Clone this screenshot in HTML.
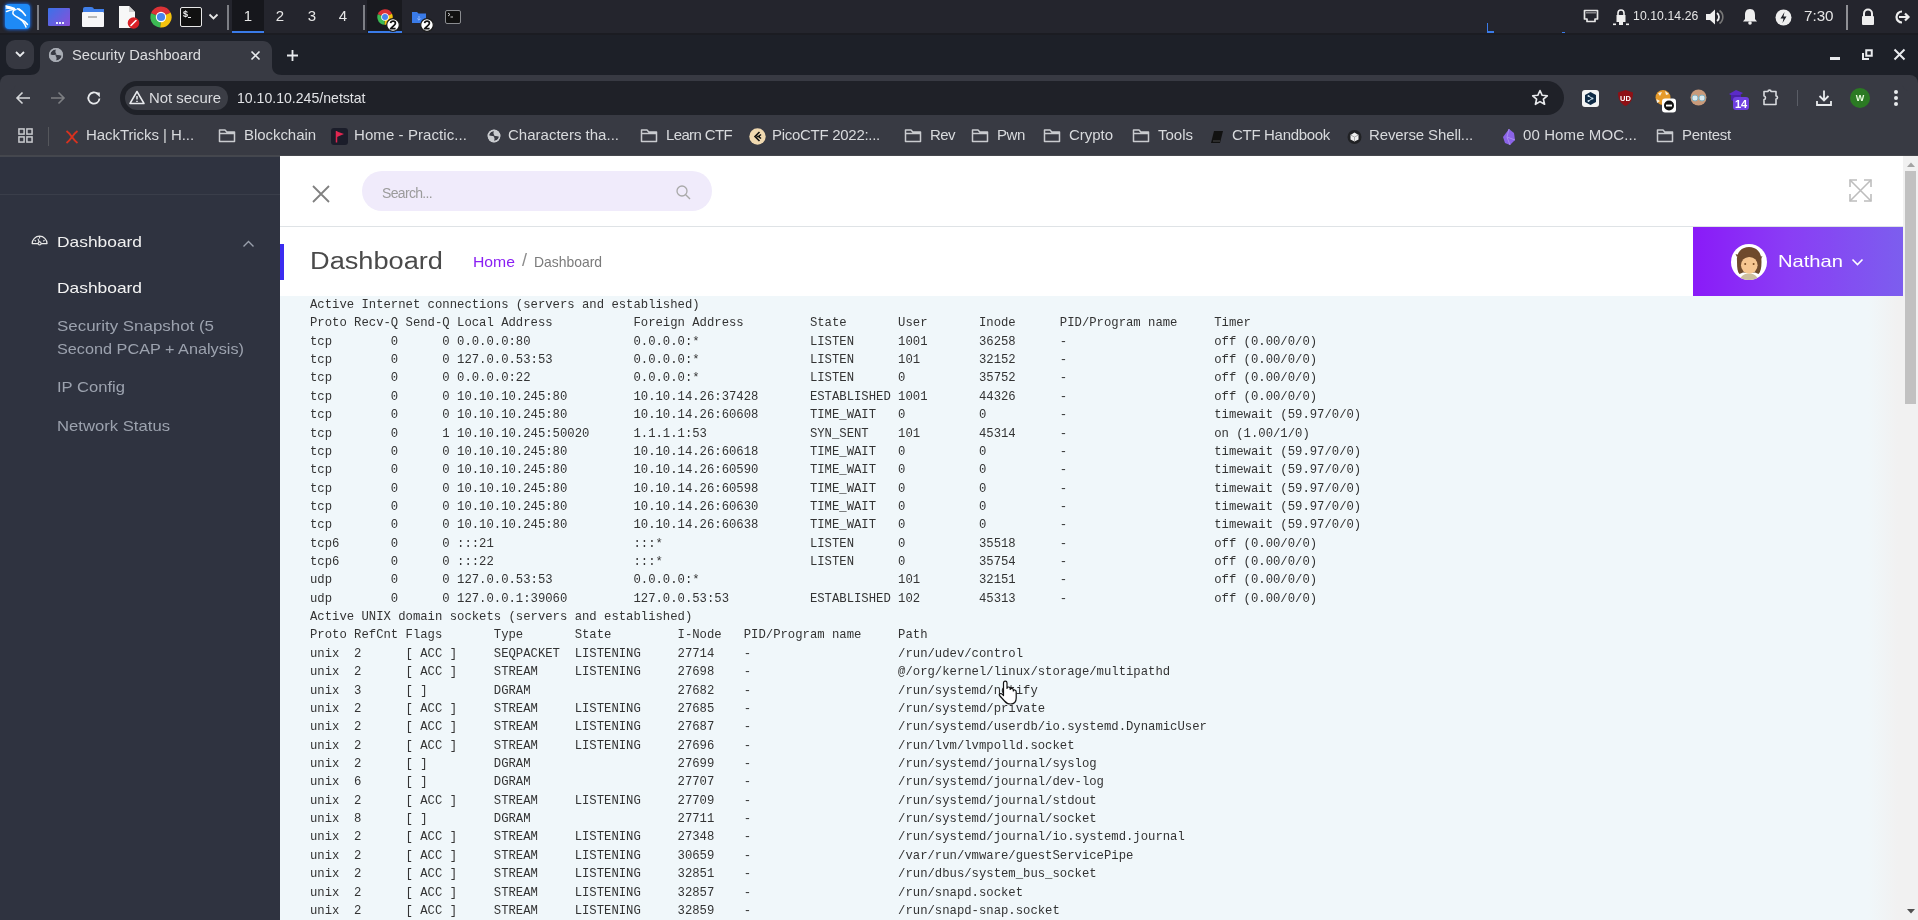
<!DOCTYPE html>
<html><head><meta charset="utf-8">
<style>
*{margin:0;padding:0;box-sizing:border-box}
html,body{width:1918px;height:920px;overflow:hidden;background:#202124;font-family:"Liberation Sans",sans-serif}
.abs{position:absolute}
#taskbar,#tabstrip,#toolbar,#bmbar,#page{will-change:transform}
#taskbar{left:0;top:0;width:1918px;height:34px;background:#24252d}
#tabstrip{left:0;top:33px;width:1918px;height:42px;background:#1d2028}
#toolbar{left:0;top:75px;width:1918px;height:43px;background:#383a43}
#bmbar{left:0;top:118px;width:1918px;height:38px;background:#383a43}
#page{left:0;top:156px;width:1918px;height:764px;background:#f0f6f9;overflow:hidden}
#sidebar{left:0;top:0;width:280px;height:764px;background:#2f3340}
#header{left:280px;top:0;width:1623px;height:71px;background:#fff;border-bottom:1px solid #dfe3e6}
#titlebar{left:280px;top:71px;width:1623px;height:69px;background:#fff}
#content{left:280px;top:140px;width:1623px;height:624px;background:#f0f7fa}
pre{font-family:"Liberation Mono",monospace;font-size:12.25px;line-height:18.358px;color:#333}
#scroll{left:1903px;top:0;width:15px;height:764px;background:#f1f1f1}
.tb{color:#e6e6e6;font-size:15px}
.badge{width:13px;height:13px;border-radius:50%;background:#fff;border:1.5px solid #111;color:#111;font:bold 10px "Liberation Sans",sans-serif;text-align:center;line-height:10px}
.sb{font-size:14.6px;white-space:nowrap}
.bm{color:#d8dadd;font-size:15px;white-space:nowrap}
</style></head><body>
<div id="taskbar" class="abs">
  <!-- kali -->
  <div class="abs" style="left:5px;top:4px;width:25px;height:25px;border-radius:4px;background:#1e8af6;box-shadow:0 0 3px 1px #1a5fc8"></div>
  <svg class="abs" style="left:0;top:0" width="36" height="36" viewBox="0 0 36 36"><g stroke="#fff" stroke-width="1.5" fill="none" stroke-linecap="round"><path d="M6 6 C9 6.5 12 7.5 14.5 8.5"/><path d="M6.2 8 C9 8.2 12 8.6 14 9.2"/><path d="M6.5 11.5 C9 10.5 11.5 9.8 14 9.6"/><path d="M7 7 L10 7.8"/><path d="M19 9 C21.5 10.5 23.5 12.5 25.5 15.5"/><path d="M16 9.5 C12.5 10 12 13.5 14 15 C16 17 20 18 22.5 21 C24 23 25.5 25 26 27"/><path d="M21 19.5 C23.5 20.5 26 22 27.5 24.5"/><path d="M17.5 8.8 C19 9.5 20.5 10.5 22 11.5"/></g></svg>
  <div class="abs" style="left:37px;top:5px;width:2px;height:25px;background:#7d7f85"></div>
  <div class="abs" style="left:48px;top:8px;width:22px;height:18px;border-radius:1px;background:linear-gradient(135deg,#3a72e8,#8a4fd8)"></div>
  <div class="abs" style="left:56px;top:22px;width:2px;height:2px;background:#e8eeff;box-shadow:3px 0 0 #e8eeff,6px 0 0 #e8eeff"></div>
  <div class="abs" style="left:83px;top:7px;width:11px;height:4px;border-radius:2px 3px 0 0;background:#3f7ee8"></div>
  <div class="abs" style="left:83px;top:9px;width:21px;height:3px;background:#3f7ee8"></div>
  <div class="abs" style="left:82px;top:12px;width:22px;height:15px;border-radius:1px;background:#f6f6f8"></div>
  <div class="abs" style="left:88px;top:16px;width:9px;height:2px;background:#b8b8b8"></div>
  <svg class="abs" style="left:117px;top:5px" width="24" height="25" viewBox="0 0 24 25"><path d="M2 1 H12 L18 7 V23 H2 Z" fill="#f7f7f7"/><path d="M12 1 L18 7 H12 Z" fill="#d0d0d0"/><circle cx="16.5" cy="18" r="5.8" fill="#d92127"/><path d="M14 20.5 L19 15.5" stroke="#fff" stroke-width="1.6" stroke-linecap="round"/></svg>
  <svg class="abs" style="left:150px;top:6px" width="22" height="22" viewBox="0 0 22 22"><path d="M11 11 L1.04 7.37 A10.6 10.6 0 0 1 20.61 6.52 Z" fill="#db3236"/><path d="M11 11 L20.61 6.52 A10.6 10.6 0 0 1 10.08 21.56 Z" fill="#f4c20d"/><path d="M11 11 L10.08 21.56 A10.6 10.6 0 0 1 1.04 7.37 Z" fill="#3cba54"/><circle cx="11" cy="11" r="5.2" fill="#fff"/><circle cx="11" cy="11" r="4.1" fill="#4885ed"/></svg>
  <div class="abs" style="left:180px;top:7px;width:22px;height:20px;border:1.5px solid #e8e8e8;border-radius:2px;background:#111"></div>
  <div class="abs" style="left:183px;top:9px;font:bold 9px 'Liberation Sans',sans-serif;color:#f2f2f2">$</div><div class="abs" style="left:188px;top:17px;width:3px;height:1px;background:#eee"></div>
  <svg class="abs" style="left:208px;top:13px" width="11" height="8" viewBox="0 0 11 8"><path d="M1.5 1.5 L5.5 5.5 L9.5 1.5" stroke="#e6e6e6" stroke-width="1.8" fill="none"/></svg>
  <div class="abs" style="left:227px;top:5px;width:2px;height:25px;background:#7d7f85"></div>
  <div class="abs" style="left:232px;top:0;width:32px;height:34px;background:#16171c"></div>
  <div class="abs" style="left:232px;top:31px;width:32px;height:3px;background:#3a7be8"></div>
  <div class="abs tb" style="left:242px;top:7px;width:12px;text-align:center">1</div>
  <div class="abs tb" style="left:274px;top:7px;width:12px;text-align:center">2</div>
  <div class="abs tb" style="left:306px;top:7px;width:12px;text-align:center">3</div>
  <div class="abs tb" style="left:337px;top:7px;width:12px;text-align:center">4</div>
  <div class="abs" style="left:363px;top:5px;width:2px;height:25px;background:#7d7f85"></div>
  <div class="abs" style="left:367px;top:0;width:35px;height:34px;background:#191a1f"></div>
  <div class="abs" style="left:368px;top:31px;width:34px;height:3px;background:#3a7be8"></div>
  <svg class="abs" style="left:377px;top:9px" width="16" height="16" viewBox="0 0 22 22"><path d="M11 11 L1.04 7.37 A10.6 10.6 0 0 1 20.61 6.52 Z" fill="#db3236"/><path d="M11 11 L20.61 6.52 A10.6 10.6 0 0 1 10.08 21.56 Z" fill="#f4c20d"/><path d="M11 11 L10.08 21.56 A10.6 10.6 0 0 1 1.04 7.37 Z" fill="#3cba54"/><circle cx="11" cy="11" r="5.2" fill="#fff"/><circle cx="11" cy="11" r="4.1" fill="#4885ed"/></svg>
  <svg class="abs" style="left:386px;top:18px" width="14" height="14" viewBox="0 0 14 14"><circle cx="7" cy="7" r="6.3" fill="#fff" stroke="#1a1a1a" stroke-width="1.2"/><path d="M4.6 5.2 C4.8 3.6 6 3.2 7.1 3.2 C8.6 3.2 9.4 4.1 9.4 5.2 C9.4 6.6 8 7.6 4.6 10.6 H9.6" stroke="#111" stroke-width="1.7" fill="none" stroke-linejoin="round"/></svg>
  <svg class="abs" style="left:411px;top:11px" width="16" height="13" viewBox="0 0 16 13"><path d="M1 1 H6 L7.5 2.5 H15 V12 H1 Z" fill="#3a7be8"/><path d="M8 5 V9 M6.3 7.5 L8 9.2 L9.7 7.5" stroke="#9cc0ff" stroke-width="0.9" fill="none"/></svg>
  <svg class="abs" style="left:420px;top:18px" width="14" height="14" viewBox="0 0 14 14"><circle cx="7" cy="7" r="6.3" fill="#fff" stroke="#1a1a1a" stroke-width="1.2"/><path d="M4.6 5.2 C4.8 3.6 6 3.2 7.1 3.2 C8.6 3.2 9.4 4.1 9.4 5.2 C9.4 6.6 8 7.6 4.6 10.6 H9.6" stroke="#111" stroke-width="1.7" fill="none" stroke-linejoin="round"/></svg>
  <div class="abs" style="left:445px;top:10px;width:16px;height:14px;border:1.5px solid #8a8c90;border-radius:2px;background:#111"></div>
  <svg class="abs" style="left:447px;top:12px" width="8" height="6" viewBox="0 0 8 6"><path d="M1 1 L3 2.5 L1 4 M3.5 5 H6" stroke="#ddd" stroke-width="0.9" fill="none"/></svg>

  <div class="abs" style="left:1487px;top:23px;width:1px;height:9px;background:#3a7be8"></div>
  <div class="abs" style="left:1487px;top:31px;width:7px;height:2px;background:#3a7be8"></div>
  <div class="abs" style="left:1562px;top:32px;width:3px;height:1px;background:#3a7be8"></div>
  <!-- right -->
  <svg class="abs" style="left:1583px;top:9px" width="16" height="15" viewBox="0 0 16 15"><path d="M1.5 1.5 H14.5 V10 H12 V12.5 H4 V10 H1.5 Z" fill="none" stroke="#e6e6e6" stroke-width="1.7" stroke-linejoin="round"/><path d="M4 3 V4.5 M6 3 V4.5 M8 3 V4.5 M10 3 V4.5 M12 3 V4.5" stroke="#e6e6e6" stroke-width="1"/></svg>
  <svg class="abs" style="left:1612px;top:8px" width="18" height="18" viewBox="0 0 18 18"><path d="M6 7 V5 A3 3 0 0 1 12 5 V7" stroke="#eee" stroke-width="1.6" fill="none"/><rect x="4.5" y="7" width="9" height="7" fill="#eee"/><rect x="1" y="15.5" width="3" height="1.6" fill="#eee"/><rect x="7" y="14" width="4" height="3" fill="#eee"/><rect x="14" y="15.5" width="3" height="1.6" fill="#eee"/></svg>
  <div class="abs" style="left:1633px;top:9px;font-size:12.2px;color:#e6e6e6;letter-spacing:0.1px">10.10.14.26</div>
  <svg class="abs" style="left:1705px;top:8px" width="19" height="18" viewBox="0 0 19 18"><path d="M1 6 H5 L10 1.5 V16.5 L5 12 H1 Z" fill="#eee"/><path d="M12 5 A5 5 0 0 1 12 13" stroke="#eee" stroke-width="1.8" fill="none"/><path d="M14.5 2.5 A8 8 0 0 1 14.5 15.5" stroke="#777" stroke-width="1.6" fill="none"/></svg>
  <svg class="abs" style="left:1742px;top:8px" width="16" height="17" viewBox="0 0 16 17"><path d="M8 1 C4 1 3 4 3 7 V11 L1 13.5 H15 L13 11 V7 C13 4 12 1 8 1 Z" fill="#eee"/><circle cx="8" cy="15" r="1.8" fill="#eee"/></svg>
  <svg class="abs" style="left:1775px;top:9px" width="17" height="17" viewBox="0 0 17 17"><circle cx="8.5" cy="8.5" r="8" fill="#eee"/><path d="M9.5 3 L5.5 9.5 H8.5 L7.5 14 L11.5 7.5 H8.5 Z" fill="#1c1e24"/></svg>
  <div class="abs tb" style="left:1804px;top:7px;font-size:15.2px">7:30</div>
  <div class="abs" style="left:1846px;top:5px;width:2px;height:25px;background:#8f9095"></div>
  <svg class="abs" style="left:1860px;top:8px" width="16" height="17" viewBox="0 0 16 17"><path d="M4 8 V5.5 A4 4 0 0 1 12 5.5 V8" stroke="#eee" stroke-width="2" fill="none"/><rect x="2" y="8" width="12" height="9" rx="1" fill="#eee"/></svg>
  <svg class="abs" style="left:1893px;top:9px" width="18" height="16" viewBox="0 0 18 16"><path d="M9 2.5 A5.5 5.5 0 1 0 9 13.5" stroke="#eee" stroke-width="2.2" fill="none"/><path d="M6 8 H15 M12 4.5 L15.5 8 L12 11.5" stroke="#eee" stroke-width="2.2" fill="none"/></svg>
</div>
<div id="tabstrip" class="abs">
  <div class="abs" style="left:0;top:0;width:1918px;height:2px;background:#1b1c22"></div>
  <div class="abs" style="left:6px;top:7px;width:28px;height:29px;border-radius:9px;background:#363841"></div>
  <svg class="abs" style="left:14px;top:16px" width="12" height="10" viewBox="0 0 12 10"><path d="M2 3 L6 7 L10 3" stroke="#e8eaed" stroke-width="1.8" fill="none"/></svg>
  <svg class="abs" style="left:30px;top:8px" width="252" height="34" viewBox="0 0 252 34"><path d="M0 34 C6 34 10 31 10 25 V9 C10 4 14 0 19 0 H233 C238 0 242 4 242 9 V25 C242 31 246 34 252 34 Z" fill="#383a43"/></svg>
  <svg class="abs" style="left:48px;top:14px" width="16" height="16" viewBox="0 0 16 16"><circle cx="8" cy="8" r="7.1" fill="#a9adb5"/><path d="M2.3 7.2 C2.8 4.4 5 2.6 8 2.6 C7 4.2 7.2 6.2 8.8 7.6 C6.6 8.4 4.4 8.2 2.3 7.2 Z" fill="#383a43"/><path d="M7.2 8.4 C9.4 7.6 11.6 7.8 13.7 8.8 C13.2 11.6 11 13.4 8 13.4 C9 11.8 8.8 9.8 7.2 8.4 Z" fill="#383a43"/><circle cx="8" cy="8" r="6.4" fill="none" stroke="#a9adb5" stroke-width="1.3"/></svg>
  <div class="abs" style="left:72px;top:14px;font-size:14.7px;color:#dcdde0;white-space:nowrap">Security Dashboard</div>
  <svg class="abs" style="left:250px;top:17px" width="11" height="11" viewBox="0 0 11 11"><path d="M1.5 1.5 L9.5 9.5 M9.5 1.5 L1.5 9.5" stroke="#e8eaed" stroke-width="1.7"/></svg>
  <svg class="abs" style="left:286px;top:16px" width="13" height="13" viewBox="0 0 13 13"><path d="M6.5 1 V12 M1 6.5 H12" stroke="#e8eaed" stroke-width="1.8"/></svg>
  <div class="abs" style="left:1830px;top:24px;width:10px;height:3px;background:#e8eaed"></div>
  <svg class="abs" style="left:1861px;top:16px" width="13" height="13" viewBox="0 0 13 13"><rect x="5.25" y="1.25" width="5.5" height="5.5" fill="none" stroke="#e8eaed" stroke-width="2"/><path d="M2 4 V10 H8" fill="none" stroke="#e8eaed" stroke-width="2"/></svg>
  <svg class="abs" style="left:1893px;top:15px" width="13" height="13" viewBox="0 0 13 13"><path d="M1.5 1.5 L11.5 11.5 M11.5 1.5 L1.5 11.5" stroke="#e8eaed" stroke-width="2"/></svg>
</div>
<div id="toolbar" class="abs">
  <div class="abs" style="left:1910px;top:0;width:8px;height:8px;background:#1d2028"></div><div class="abs" style="left:1902px;top:0;width:16px;height:16px;border-radius:8px;background:#383a43"></div><div class="abs" style="left:1900px;top:0;width:10px;height:10px;background:#383a43"></div><div class="abs" style="left:1908px;top:8px;width:10px;height:10px;background:#383a43"></div>
  <div class="abs" style="left:0;top:0;width:8px;height:8px;background:#1d2028"></div><div class="abs" style="left:0;top:0;width:16px;height:16px;border-radius:8px;background:#383a43"></div><div class="abs" style="left:8px;top:0;width:10px;height:10px;background:#383a43"></div><div class="abs" style="left:0;top:8px;width:10px;height:10px;background:#383a43"></div>
  <svg class="abs" style="left:15px;top:16px" width="16" height="14" viewBox="0 0 16 14"><path d="M15 7 H2 M7.5 1.5 L2 7 L7.5 12.5" stroke="#d5d7da" stroke-width="1.6" fill="none"/></svg>
  <svg class="abs" style="left:50px;top:16px" width="16" height="14" viewBox="0 0 16 14"><path d="M1 7 H14 M8.5 1.5 L14 7 L8.5 12.5" stroke="#7d7f83" stroke-width="1.6" fill="none"/></svg>
  <svg class="abs" style="left:86px;top:15px" width="16" height="16" viewBox="0 0 16 16"><path d="M13.5 8.5 A5.6 5.6 0 1 1 11.8 4" stroke="#e8eaed" stroke-width="1.8" fill="none"/><path d="M9 2.5 H13.8 V7.3 Z" fill="#e8eaed"/></svg>
  <div class="abs" style="left:120px;top:6px;width:1444px;height:34px;border-radius:17px;background:#1f2128"></div>
  <div class="abs" style="left:125px;top:11px;width:103px;height:24px;border-radius:12px;background:#3b3d45"></div>
  <svg class="abs" style="left:129px;top:15px" width="16" height="15" viewBox="0 0 16 15"><path d="M8 1.5 L15 13.5 H1 Z" stroke="#e8eaed" stroke-width="1.5" fill="none" stroke-linejoin="round"/><path d="M8 6 V9.5 M8 10.8 V12" stroke="#e8eaed" stroke-width="1.5"/></svg>
  <div class="abs" style="left:149px;top:15px;font-size:14.9px;color:#dcdde0;white-space:nowrap">Not secure</div>
  <div class="abs" style="left:237px;top:15px;font-size:14.1px;color:#e2e3e6;white-space:nowrap">10.10.10.245/netstat</div>
  <svg class="abs" style="left:1531px;top:14px" width="18" height="18" viewBox="0 0 18 18"><path d="M9 1.5 L11.2 6.3 L16.3 6.8 L12.4 10.2 L13.6 15.3 L9 12.6 L4.4 15.3 L5.6 10.2 L1.7 6.8 L6.8 6.3 Z" stroke="#e8eaed" stroke-width="1.6" fill="none" stroke-linejoin="round"/></svg>
  <!-- extensions -->
  <div class="abs" style="left:1582px;top:15px;width:17px;height:17px;border-radius:3px;background:#f4f4f4"></div>
  <svg class="abs" style="left:1583px;top:16px" width="15" height="15" viewBox="0 0 15 15"><path d="M7.5 1 L13 4 V11 L7.5 14 L2 11 V4 Z" fill="#0f2b46"/><path d="M5.5 5 L9.5 7.5 L5.5 10" stroke="#cfe3f0" stroke-width="1" fill="none"/><circle cx="5.5" cy="5" r="1" fill="#cfe3f0"/><circle cx="9.5" cy="7.5" r="1" fill="#cfe3f0"/><circle cx="5.5" cy="10" r="1" fill="#cfe3f0"/></svg>
  <svg class="abs" style="left:1617px;top:14px" width="17" height="18" viewBox="0 0 17 18"><path d="M8.5 1 L16 3.5 C16 11 13 15 8.5 17 C4 15 1 11 1 3.5 Z" fill="#8e1015"/><text x="8.5" y="11.5" font-family="Liberation Sans" font-weight="bold" font-size="7.5" fill="#fff" text-anchor="middle">UD</text></svg>
  <svg class="abs" style="left:1654px;top:14px" width="24" height="24" viewBox="0 0 24 24"><circle cx="9" cy="8.5" r="7.5" fill="#e59a2a"/><path d="M4 4 L8 3 L6 7 Z M11 2 L15 5 L12 6 Z M2.5 10 L6 12 L3 14 Z" fill="#f5f0e6"/><rect x="8" y="9.5" width="14" height="14" rx="3" fill="#fff"/><circle cx="15" cy="16.5" r="5" fill="#111"/><rect x="12" y="15.6" width="6" height="1.9" fill="#fff"/></svg>
  <svg class="abs" style="left:1690px;top:14px" width="17" height="17" viewBox="0 0 17 17"><circle cx="8.5" cy="8.5" r="8" fill="#c99a7a"/><circle cx="5" cy="9" r="3" fill="#dbe9ee" stroke="#7fb3c5" stroke-width="1"/><circle cx="12" cy="9" r="3" fill="#dbe9ee" stroke="#7fb3c5" stroke-width="1"/></svg>
  <svg class="abs" style="left:1726px;top:12px" width="24" height="24" viewBox="0 0 24 24"><path d="M3 7 L10 3 L17 6 L10 11 Z" fill="#5b2bc8"/><path d="M5 8 V13 L10 16 L15 13 V8" fill="#4a22a8"/><rect x="7" y="10" width="16" height="13" rx="3" fill="#6f3fe0"/><text x="15" y="21" font-family="Liberation Sans" font-weight="bold" font-size="11" fill="#fff" text-anchor="middle">14</text></svg>
  <svg class="abs" style="left:1761px;top:13px" width="19" height="18" viewBox="0 0 19 18"><path d="M3 3.5 H7 C7 1.6 10 1.6 10 3.5 H15 V8 C17 8 17 11 15 11 V16.5 H3 V11.5 C5 11.5 5 8 3 8 Z" stroke="#d8dade" stroke-width="1.6" fill="none" stroke-linejoin="round"/></svg>
  <div class="abs" style="left:1797px;top:15px;width:1px;height:16px;background:#5a5d66"></div>
  <svg class="abs" style="left:1815px;top:14px" width="18" height="18" viewBox="0 0 18 18"><path d="M9 1.5 V11 M4.5 7 L9 11.5 L13.5 7 M2 12 V16 H16 V12" stroke="#e8eaed" stroke-width="1.8" fill="none"/></svg>
  <div class="abs" style="left:1850px;top:13px;width:20px;height:20px;border-radius:50%;background:#2b7a23;color:#eaffe0;font:bold 9px 'Liberation Sans',sans-serif;text-align:center;line-height:20px">W</div>
  <div class="abs" style="left:1894px;top:15px;width:4px;height:4px;border-radius:50%;background:#e8eaed;box-shadow:0 6px 0 #e8eaed,0 12px 0 #e8eaed"></div>
</div>
<div id="bmbar" class="abs">
<svg class="abs" style="left:18px;top:10px" width="15" height="15" viewBox="0 0 16 16"><rect x="1" y="1" width="5.5" height="5.5" fill="none" stroke="#c9cbcf" stroke-width="1.6"/><rect x="9.5" y="1" width="5.5" height="5.5" fill="none" stroke="#c9cbcf" stroke-width="1.6"/><rect x="1" y="9.5" width="5.5" height="5.5" fill="none" stroke="#c9cbcf" stroke-width="1.6"/><rect x="9.5" y="9.5" width="5.5" height="5.5" fill="none" stroke="#c9cbcf" stroke-width="1.6"/></svg>
<div class="abs" style="left:48px;top:9px;width:1px;height:19px;background:#55575c"></div>
<svg class="abs" style="left:64px;top:10px" width="16" height="18" viewBox="0 0 16 18"><path d="M2.5 3 C7 6 9 12 13.5 15 M13.5 3 C9 6 7 12 2.5 15" stroke="#d8321f" stroke-width="2" fill="none"/></svg>
<svg class="abs" style="left:218px;top:10px" width="18" height="15" viewBox="0 0 18 15"><path d="M1.5 2 H7 L8.8 4 H16.5 V13.5 H1.5 Z M1.5 5.5 H16.5" stroke="#c9cbcf" stroke-width="1.5" fill="none" stroke-linejoin="round"/></svg>
<div class="abs" style="left:331px;top:10px;width:17px;height:17px;border-radius:3px;background:#1b1d2a"></div><svg class="abs" style="left:335px;top:12px" width="10" height="13" viewBox="0 0 10 13"><path d="M1.5 1 V12.5" stroke="#e02650" stroke-width="1.5"/><path d="M2 1.5 L9 4 L2 7 Z" fill="#e02650"/></svg>
<svg class="abs" style="left:487px;top:11px" width="14" height="14" viewBox="0 0 16 16"><circle cx="8" cy="8" r="7.3" fill="#c9cbcf"/><path d="M2.3 7.2 C2.8 4.4 5 2.6 8 2.6 C7 4.2 7.2 6.2 8.8 7.6 C6.6 8.4 4.4 8.2 2.3 7.2 Z" fill="#383a43"/><path d="M7.2 8.4 C9.4 7.6 11.6 7.8 13.7 8.8 C13.2 11.6 11 13.4 8 13.4 C9 11.8 8.8 9.8 7.2 8.4 Z" fill="#383a43"/><circle cx="8" cy="8" r="6.5" fill="none" stroke="#c9cbcf" stroke-width="1.4"/></svg>
<svg class="abs" style="left:640px;top:10px" width="18" height="15" viewBox="0 0 18 15"><path d="M1.5 2 H7 L8.8 4 H16.5 V13.5 H1.5 Z M1.5 5.5 H16.5" stroke="#c9cbcf" stroke-width="1.5" fill="none" stroke-linejoin="round"/></svg>
<svg class="abs" style="left:749px;top:10px" width="17" height="17" viewBox="0 0 17 17"><circle cx="8.5" cy="8.5" r="8.2" fill="#f0d9b0"/><path d="M10.5 4 L6 8.5 L10.5 13 M12 6.5 L9.5 8.5 L12 10.5 M7.5 8.5 H11" stroke="#111" stroke-width="1.6" fill="none"/></svg>
<svg class="abs" style="left:904px;top:10px" width="18" height="15" viewBox="0 0 18 15"><path d="M1.5 2 H7 L8.8 4 H16.5 V13.5 H1.5 Z M1.5 5.5 H16.5" stroke="#c9cbcf" stroke-width="1.5" fill="none" stroke-linejoin="round"/></svg>
<svg class="abs" style="left:971px;top:10px" width="18" height="15" viewBox="0 0 18 15"><path d="M1.5 2 H7 L8.8 4 H16.5 V13.5 H1.5 Z M1.5 5.5 H16.5" stroke="#c9cbcf" stroke-width="1.5" fill="none" stroke-linejoin="round"/></svg>
<svg class="abs" style="left:1043px;top:10px" width="18" height="15" viewBox="0 0 18 15"><path d="M1.5 2 H7 L8.8 4 H16.5 V13.5 H1.5 Z M1.5 5.5 H16.5" stroke="#c9cbcf" stroke-width="1.5" fill="none" stroke-linejoin="round"/></svg>
<svg class="abs" style="left:1132px;top:10px" width="18" height="15" viewBox="0 0 18 15"><path d="M1.5 2 H7 L8.8 4 H16.5 V13.5 H1.5 Z M1.5 5.5 H16.5" stroke="#c9cbcf" stroke-width="1.5" fill="none" stroke-linejoin="round"/></svg>
<svg class="abs" style="left:1210px;top:12px" width="14" height="14" viewBox="0 0 14 14"><path d="M4 1 H13 L10 13 H1 Z" fill="#111"/><path d="M3 11 H10" stroke="#555" stroke-width="0.8"/></svg>
<svg class="abs" style="left:1347px;top:11px" width="15" height="16" viewBox="0 0 15 16"><circle cx="7.5" cy="8" r="7" fill="#202124"/><path d="M7.5 3.5 L11.5 6 V10.5 L7.5 12.5 L3.5 10.5 V6 Z" fill="#eee"/><path d="M3.5 6 L7.5 8 L11.5 6 M7.5 8 V12.5" stroke="#999" stroke-width="0.8" fill="none"/></svg>
<svg class="abs" style="left:1501px;top:10px" width="16" height="18" viewBox="0 0 16 18"><path d="M8 1 L13 5 L14 12 L9 17 L4 15 L2 9 Z" fill="#8b63e8"/><path d="M8 1 L6 9 L9 17 M6 9 L14 12" stroke="#a88cf0" stroke-width="1" fill="none"/></svg>
<svg class="abs" style="left:1656px;top:10px" width="18" height="15" viewBox="0 0 18 15"><path d="M1.5 2 H7 L8.8 4 H16.5 V13.5 H1.5 Z M1.5 5.5 H16.5" stroke="#c9cbcf" stroke-width="1.5" fill="none" stroke-linejoin="round"/></svg>
<div class="abs bm" style="left:86px;top:8px;width:114px"><span class="fit" style="letter-spacing:-0.070px">HackTricks | H...</span></div>
<div class="abs bm" style="left:244px;top:8px;width:78px"><span class="fit" style="letter-spacing:-0.055px">Blockchain</span></div>
<div class="abs bm" style="left:354px;top:8px;width:119px"><span class="fit" style="letter-spacing:0.077px">Home - Practic...</span></div>
<div class="abs bm" style="left:508px;top:8px;width:117px"><span class="fit" style="letter-spacing:0.006px">Characters tha...</span></div>
<div class="abs bm" style="left:666px;top:8px;width:72px"><span class="fit" style="letter-spacing:-0.634px">Learn CTF</span></div>
<div class="abs bm" style="left:772px;top:8px;width:114px"><span class="fit" style="letter-spacing:-0.284px">PicoCTF 2022:...</span></div>
<div class="abs bm" style="left:930px;top:8px;width:31px"><span class="fit" style="letter-spacing:-0.562px">Rev</span></div>
<div class="abs bm" style="left:997px;top:8px;width:34px"><span class="fit" style="letter-spacing:-0.396px">Pwn</span></div>
<div class="abs bm" style="left:1069px;top:8px;width:50px"><span class="fit" style="letter-spacing:-0.031px">Crypto</span></div>
<div class="abs bm" style="left:1158px;top:8px;width:41px"><span class="fit" style="letter-spacing:-0.006px">Tools</span></div>
<div class="abs bm" style="left:1232px;top:8px;width:104px"><span class="fit" style="letter-spacing:-0.310px">CTF Handbook</span></div>
<div class="abs bm" style="left:1369px;top:8px;width:110px"><span class="fit" style="letter-spacing:-0.118px">Reverse Shell...</span></div>
<div class="abs bm" style="left:1523px;top:8px;width:120px"><span class="fit" style="letter-spacing:0.105px">00 Home MOC...</span></div>
<div class="abs bm" style="left:1682px;top:8px;width:55px"><span class="fit" style="letter-spacing:-0.268px">Pentest</span></div>
<div class="abs" style="left:0;top:37px;width:1918px;height:1px;background:#45474d"></div>
</div>
<div id="page" class="abs">
  <div id="sidebar" class="abs">
    <div class="abs" style="left:0;top:0;width:280px;height:1px;background:#44474f"></div>
    <div class="abs" style="left:0;top:38px;width:280px;height:1px;background:#3a3e4a"></div>
    <svg class="abs" style="left:31px;top:77px" width="18" height="14" viewBox="0 0 18 14"><path d="M1.2 10.6 A7.4 7.4 0 0 1 16 10.6 Z" fill="none" stroke="#e8e8e8" stroke-width="1.3" stroke-linejoin="round"/><path d="M8.6 3.2 V5.6 M3.6 7.2 L5 8.2 M13.6 7.2 L12.2 8.2 M6.9 5.6 L8.3 9" stroke="#e8e8e8" stroke-width="1.1"/><circle cx="8.6" cy="10.4" r="1.5" fill="#2f3340" stroke="#e8e8e8" stroke-width="1.1"/></svg>
    <div class="abs sb" style="left:57px;top:78px;color:#f0f0f0"><span class="fitx" style="display:inline-block;transform-origin:0 0;transform:scaleX(1.1904)">Dashboard</span></div>
    <svg class="abs" style="left:242px;top:84px" width="13" height="8" viewBox="0 0 13 8"><path d="M1.5 6.5 L6.5 1.5 L11.5 6.5" stroke="#9aa0ac" stroke-width="1.4" fill="none"/></svg>
    <div class="abs sb" style="left:57px;top:124px;color:#f4f4f4"><span class="fitx" style="display:inline-block;transform-origin:0 0;transform:scaleX(1.1904)">Dashboard</span></div>
    <div class="abs sb" style="left:57px;top:162px;color:#9ca2ae"><span class="fitx" style="display:inline-block;transform-origin:0 0;transform:scaleX(1.1588)">Security Snapshot (5</span></div>
    <div class="abs sb" style="left:57px;top:185px;color:#9ca2ae"><span class="fitx" style="display:inline-block;transform-origin:0 0;transform:scaleX(1.1127)">Second PCAP + Analysis)</span></div>
    <div class="abs sb" style="left:57px;top:223px;color:#9ca2ae"><span class="fitx" style="display:inline-block;transform-origin:0 0;transform:scaleX(1.1378)">IP Config</span></div>
    <div class="abs sb" style="left:57px;top:262px;color:#9ca2ae"><span class="fitx" style="display:inline-block;transform-origin:0 0;transform:scaleX(1.1420)">Network Status</span></div>
  </div>
  <div id="header" class="abs">
    <svg class="abs" style="left:32px;top:29px" width="18" height="18" viewBox="0 0 18 18"><path d="M1 1 L17 17 M17 1 L1 17" stroke="#808080" stroke-width="1.8"/></svg>
    <div class="abs" style="left:82px;top:15px;width:350px;height:40px;border-radius:20px;background:#f0ebfb"></div>
    <div class="abs" style="left:102px;top:29px;font-size:14px;color:#9b9b9b;white-space:nowrap"><span class="fit" style="letter-spacing:-0.670px">Search...</span></div>
    <svg class="abs" style="left:396px;top:29px" width="15" height="15" viewBox="0 0 15 15"><circle cx="6" cy="6" r="5" fill="none" stroke="#a9a9a9" stroke-width="1.3"/><path d="M9.7 9.7 L14 14" stroke="#a9a9a9" stroke-width="1.4"/></svg>
    <svg class="abs" style="left:1568px;top:22px" width="25" height="25" viewBox="0 0 25 25"><g stroke="#bdbdbd" stroke-width="1.6" fill="none"><path d="M2 2 L23 23 M23 2 L2 23"/><path d="M2 9 V2 H9 M16 2 H23 V9 M23 16 V23 H16 M9 23 H2 V16"/></g></svg>
  </div>
  <div id="titlebar" class="abs">
    <div class="abs" style="left:0;top:17px;width:4px;height:36px;background:#3b2cf0"></div>
    <div class="abs" style="left:30px;top:21px;font-size:23px;color:#4a4a4a;white-space:nowrap;font-weight:normal"><span class="fitx" style="display:inline-block;transform-origin:0 0;transform:scaleX(1.1819)">Dashboard</span></div>
    <div class="abs" style="left:193px;top:27px;font-size:14.5px;color:#8a1ff3;white-space:nowrap"><span class="fitx" style="display:inline-block;transform-origin:0 0;transform:scaleX(1.0856)">Home</span></div>
    <div class="abs" style="left:242px;top:23px;font-size:18px;color:#8c8c8c">/</div>
    <div class="abs" style="left:254px;top:27px;font-size:14.5px;color:#7b7b7b;white-space:nowrap"><span class="fitx" style="display:inline-block;transform-origin:0 0;transform:scaleX(0.9586)">Dashboard</span></div>
    <div class="abs" style="left:1413px;top:0;width:210px;height:69px;background:linear-gradient(90deg,#8a1af8 0%,#8a3df5 45%,#7c5eee 100%)"></div>
    <div class="abs" style="left:1451px;top:17px;width:36px;height:36px;border-radius:50%;background:#fff;overflow:hidden">
      <svg width="36" height="36" viewBox="0 0 36 36"><path d="M9 36 C10 31 14 29.5 18 29.5 C22 29.5 26 31 27 36 Z" fill="#cdbf9f"/><path d="M6 18 C5 8 11 3 18 3 C25 3 31 8 30.5 18 C30.5 24 29.5 28 27.5 30 L24 28.5 L12 28.5 L8.5 30 C6.5 28 6 24 6 18 Z" fill="#6f4a2c"/><path d="M4.5 10 L8 11 L6 13 Z M31.5 12 L29 13 L30 15 Z" fill="#6f4a2c"/><ellipse cx="18.3" cy="21.3" rx="8.3" ry="8.4" fill="#f6c690"/><path d="M9 17 C9.5 10 13.5 7.5 18.5 7.5 C23.5 7.5 27.5 10.5 27.8 17 C25 13.5 21 12.5 17 13 C14 13.3 11.5 15 9 17 Z" fill="#6f4a2c"/><circle cx="14.2" cy="20" r="1" fill="#7a4a20"/><circle cx="22.6" cy="20" r="1" fill="#7a4a20"/></svg>
    </div>
    <div class="abs" style="left:1498px;top:25px;font-size:16.5px;color:#fff;white-space:nowrap"><span class="fitx" style="display:inline-block;transform-origin:0 0;transform:scaleX(1.2214)">Nathan</span></div>
    <svg class="abs" style="left:1571px;top:31px" width="13" height="9" viewBox="0 0 13 9"><path d="M1.5 1.5 L6.5 6.5 L11.5 1.5" stroke="#fff" stroke-width="1.6" fill="none"/></svg>
  </div>
  <div id="content" class="abs">
<pre class="abs" style="left:30px;top:0px">Active Internet connections (servers and established)
Proto Recv-Q Send-Q Local Address           Foreign Address         State       User       Inode      PID/Program name     Timer
tcp        0      0 0.0.0.0:80              0.0.0.0:*               LISTEN      1001       36258      -                    off (0.00/0/0)
tcp        0      0 127.0.0.53:53           0.0.0.0:*               LISTEN      101        32152      -                    off (0.00/0/0)
tcp        0      0 0.0.0.0:22              0.0.0.0:*               LISTEN      0          35752      -                    off (0.00/0/0)
tcp        0      0 10.10.10.245:80         10.10.14.26:37428       ESTABLISHED 1001       44326      -                    off (0.00/0/0)
tcp        0      0 10.10.10.245:80         10.10.14.26:60608       TIME_WAIT   0          0          -                    timewait (59.97/0/0)
tcp        0      1 10.10.10.245:50020      1.1.1.1:53              SYN_SENT    101        45314      -                    on (1.00/1/0)
tcp        0      0 10.10.10.245:80         10.10.14.26:60618       TIME_WAIT   0          0          -                    timewait (59.97/0/0)
tcp        0      0 10.10.10.245:80         10.10.14.26:60590       TIME_WAIT   0          0          -                    timewait (59.97/0/0)
tcp        0      0 10.10.10.245:80         10.10.14.26:60598       TIME_WAIT   0          0          -                    timewait (59.97/0/0)
tcp        0      0 10.10.10.245:80         10.10.14.26:60630       TIME_WAIT   0          0          -                    timewait (59.97/0/0)
tcp        0      0 10.10.10.245:80         10.10.14.26:60638       TIME_WAIT   0          0          -                    timewait (59.97/0/0)
tcp6       0      0 :::21                   :::*                    LISTEN      0          35518      -                    off (0.00/0/0)
tcp6       0      0 :::22                   :::*                    LISTEN      0          35754      -                    off (0.00/0/0)
udp        0      0 127.0.0.53:53           0.0.0.0:*                           101        32151      -                    off (0.00/0/0)
udp        0      0 127.0.0.1:39060         127.0.0.53:53           ESTABLISHED 102        45313      -                    off (0.00/0/0)
Active UNIX domain sockets (servers and established)
Proto RefCnt Flags       Type       State         I-Node   PID/Program name     Path
unix  2      [ ACC ]     SEQPACKET  LISTENING     27714    -                    /run/udev/control
unix  2      [ ACC ]     STREAM     LISTENING     27698    -                    @/org/kernel/linux/storage/multipathd
unix  3      [ ]         DGRAM                    27682    -                    /run/systemd/notify
unix  2      [ ACC ]     STREAM     LISTENING     27685    -                    /run/systemd/private
unix  2      [ ACC ]     STREAM     LISTENING     27687    -                    /run/systemd/userdb/io.systemd.DynamicUser
unix  2      [ ACC ]     STREAM     LISTENING     27696    -                    /run/lvm/lvmpolld.socket
unix  2      [ ]         DGRAM                    27699    -                    /run/systemd/journal/syslog
unix  6      [ ]         DGRAM                    27707    -                    /run/systemd/journal/dev-log
unix  2      [ ACC ]     STREAM     LISTENING     27709    -                    /run/systemd/journal/stdout
unix  8      [ ]         DGRAM                    27711    -                    /run/systemd/journal/socket
unix  2      [ ACC ]     STREAM     LISTENING     27348    -                    /run/systemd/journal/io.systemd.journal
unix  2      [ ACC ]     STREAM     LISTENING     30659    -                    /var/run/vmware/guestServicePipe
unix  2      [ ACC ]     STREAM     LISTENING     32851    -                    /run/dbus/system_bus_socket
unix  2      [ ACC ]     STREAM     LISTENING     32857    -                    /run/snapd.socket
unix  2      [ ACC ]     STREAM     LISTENING     32859    -                    /run/snapd-snap.socket
</pre>
  </div>
  <div class="abs" style="left:1868px;top:140px;width:35px;height:624px;background:linear-gradient(90deg,rgba(241,241,241,0),#f1f1f1 85%)"></div>
  <div id="scroll" class="abs">
    <svg class="abs" style="left:4px;top:6px" width="8" height="5" viewBox="0 0 8 5"><path d="M0 5 L4 0.5 L8 5 Z" fill="#a3a3a3"/></svg>
    <div class="abs" style="left:2px;top:15px;width:11px;height:233px;background:#c1c1c1"></div>
    <svg class="abs" style="left:4px;top:753px" width="8" height="5" viewBox="0 0 8 5"><path d="M0 0 L8 0 L4 4.5 Z" fill="#505050"/></svg>
  </div>
</div>
<svg class="abs" style="left:997px;top:680px;z-index:10" width="22" height="26" viewBox="0 0 22 26"><path d="M6.5 15.5 V3 Q6.5 1.2 8.25 1.2 Q10 1.2 10 3 V8.5 Q10 7 11.6 7 Q13.2 7 13.2 8.7 V9.5 Q13.4 8.2 14.8 8.3 Q16.3 8.5 16.3 10 V11 Q16.6 9.8 17.9 10 Q19.2 10.2 19.2 12 V18 Q19.2 24 13.5 24 Q10 24 7.5 21 L2.5 15.5 Q1.8 14.3 3 13.8 Q4.3 13.3 5.2 14.2 Z" fill="#fff" stroke="#111" stroke-width="1.2" stroke-linejoin="round"/></svg>
</body></html>
